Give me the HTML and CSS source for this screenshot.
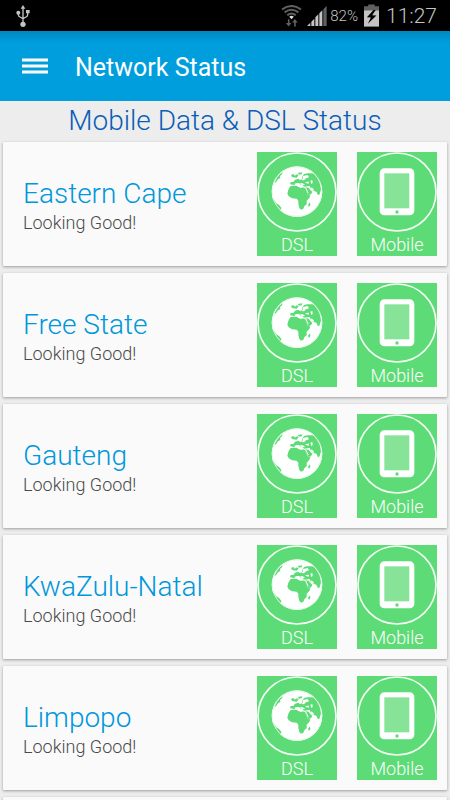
FILE: index.html
```html
<!DOCTYPE html>
<html lang="en">
<head>
<meta charset="utf-8">
<meta name="viewport" content="width=device-width, initial-scale=1">
<title>Network Status</title>
<link rel="stylesheet" href="styles.css">
</head>
<body>
<svg class="defs" aria-hidden="true">
  <symbol id="globe" viewBox="0 0 240 240">
    <circle class="ring" cx="120" cy="120" r="117"/>
    <circle class="solid" cx="120" cy="119" r="76"/>
    <g class="land">
      <path d="M100 103L108 101L119 101L124 105L133 108L137 106L145 109L149 120L153 129L160 130L157 138L149 146L149 157L143 161L139 170L132 173L127 168L124 155L124 146L119 140L105 139L95 133L91 125L94 113Z"/>
      <path d="M145 106L155 107L160 114L166 119L162 127L154 129L148 118Z"/>
      <path d="M99 97L101 90L109 90L114 83L124 80L129 84L136 80L136 74L141 66L151 64L172 64L184 77L190 91L192 112L188 127L183 130L178 119L168 116L161 109L158 102L141 104L136 99L131 100L126 93L120 93L112 99Z"/>
      <path d="M103 68L110 66L113 71L120 67L125 70L119 77L108 76L103 73ZM122 63L136 61L134 67L126 68ZM153 158L159 151L160 159L156 165Z"/>
      <path d="M69 64L77 60L75 67L69 72L70 78L63 82L57 91L52 92L59 76ZM47 145L52 145L58 154L66 159L73 167L72 174L65 173L54 162Z"/>
    </g>
    <path class="solid" d="M126 95L135 93L143 97L142 100L134 99ZM145 90L156 89L155 95L147 93ZM160 86L166 84L167 93L163 96ZM138 72L152 69L156 76L147 79L141 85L132 84L138 80ZM145 107L148 108L155 123L152 123ZM164 106L171 113L169 117L161 111ZM113 95L118 94L131 100L126 102L114 99Z"/>
    <circle class="rim" cx="120" cy="119" r="74"/>
  </symbol>
  <symbol id="tablet" viewBox="0 0 240 240">
    <circle class="ring" cx="120" cy="120" r="117"/>
    <rect class="solid" x="68" y="49" width="104" height="141" rx="14"/>
    <rect class="screen" x="82" y="64" width="75" height="105"/>
    <circle class="home" cx="120" cy="180" r="5"/>
  </symbol>
</svg>

<div class="statusbar">
  <svg class="usb" viewBox="0 0 42 66" role="img" aria-label="USB connected">
    <path class="wire" d="M21 8V57M7 24V29Q7 34 12 36L21 41M35 22V29Q35 34 30 36L21 41"/>
    <path d="M21 0L28 11H14ZM30 15H41V25H30Z"/>
    <circle cx="7" cy="23" r="6"/><circle cx="21" cy="58" r="8"/>
  </svg>
  <div class="indicators">
    <svg class="wifi" viewBox="0 0 64 66" role="img" aria-label="Wi-Fi">
      <path class="wave" d="M3 13Q32 -8 61 13M11 22Q32 6 53 22M19 31Q32 20 45 31"/>
      <path class="signal" d="M25 35Q32 30 39 35L32 43Z"/>
      <path class="wave-fill" d="M21 43H26V54H32L23 65L15 54H21ZM40 65H45V53H51L42 42L34 53H40Z"/>
    </svg>
    <svg class="cell" viewBox="0 0 60 60" role="img" aria-label="Mobile signal">
      <path d="M0 60L10 50V60ZM13 60V47L22 38V60ZM25 60V34L34 25V60ZM37 60V22L46 13V60Z"/>
      <path class="wave-fill" d="M49 60V10L59 0V60Z"/>
    </svg>
    <span class="percent">82%</span>
    <svg class="battery" viewBox="0 0 46 68" role="img" aria-label="Charging">
      <path class="wave-fill" d="M13 0H33V6H46V18H0V6H13Z"/>
      <path d="M0 18H46V68H0Z"/>
      <path class="bolt" d="M29 17L9 39L21 40L12 59L38 34L25 33L36 17Z"/>
    </svg>
    <time class="clock">11:27</time>
  </div>
</div>

<header class="appbar">
  <button class="menu" type="button" aria-label="Open menu">
    <svg viewBox="0 0 26 16"><path d="M0 2H26M0 8H26M0 14H26"/></svg>
  </button>
  <h1>Network Status</h1>
</header>

<main>
  <h2>Mobile Data &amp; DSL Status</h2>
  <ul class="regions">
    <li class="card">
      <div class="info"><h3>Eastern Cape</h3><p>Looking Good!</p></div>
      <div class="tile"><svg><use href="#globe"/></svg><span>DSL</span></div>
      <div class="tile"><svg><use href="#tablet"/></svg><span>Mobile</span></div>
    </li>
    <li class="card">
      <div class="info"><h3>Free State</h3><p>Looking Good!</p></div>
      <div class="tile"><svg><use href="#globe"/></svg><span>DSL</span></div>
      <div class="tile"><svg><use href="#tablet"/></svg><span>Mobile</span></div>
    </li>
    <li class="card">
      <div class="info"><h3>Gauteng</h3><p>Looking Good!</p></div>
      <div class="tile"><svg><use href="#globe"/></svg><span>DSL</span></div>
      <div class="tile"><svg><use href="#tablet"/></svg><span>Mobile</span></div>
    </li>
    <li class="card">
      <div class="info"><h3>KwaZulu-Natal</h3><p>Looking Good!</p></div>
      <div class="tile"><svg><use href="#globe"/></svg><span>DSL</span></div>
      <div class="tile"><svg><use href="#tablet"/></svg><span>Mobile</span></div>
    </li>
    <li class="card">
      <div class="info"><h3>Limpopo</h3><p>Looking Good!</p></div>
      <div class="tile"><svg><use href="#globe"/></svg><span>DSL</span></div>
      <div class="tile"><svg><use href="#tablet"/></svg><span>Mobile</span></div>
    </li>
    <li class="card next"></li>
  </ul>
</main>
</body>
</html>
```
FILE: styles.css
```css
* {
  box-sizing: border-box;
}

body {
  margin: 0;
  height: 100vh;
  display: flex;
  flex-direction: column;
  background: #ededed;
  font-family: Roboto, "Liberation Sans", sans-serif;
}

h1,
h2,
h3,
p,
ul {
  margin: 0;
  padding: 0;
  font-weight: 350;
}

.defs {
  position: absolute;
  width: 0;
  height: 0;
}

.statusbar {
  flex: none;
  display: flex;
  align-items: center;
  justify-content: space-between;
  height: 31px;
  padding: 0 13px 0 16px;
  background: #000;
  color: #c4c4c4;
  fill: #c4c4c4;
}

.usb {
  width: 14px;
  height: 22px;
}

.wire {
  fill: none;
  stroke: #c4c4c4;
  stroke-width: 4;
}

.indicators {
  display: flex;
  align-items: center;
}

.wifi {
  width: 21px;
  height: 22px;
  margin-right: 5px;
}

.wave {
  fill: none;
  stroke: #606060;
  stroke-width: 6;
}

.wave-fill {
  fill: #606060;
}

.signal {
  fill: #ddd;
}

.cell {
  width: 20px;
  height: 20px;
  margin-right: 3px;
}

.percent {
  margin-right: 6px;
  font-size: 15px;
  font-weight: 350;
}

.battery {
  width: 15px;
  height: 23px;
  margin-right: 7px;
}

.bolt {
  fill: #000;
}

.clock {
  font-size: 21px;
  font-weight: 350;
}

.appbar {
  flex: none;
  display: flex;
  align-items: center;
  gap: 19px;
  height: 70px;
  padding: 0 14px;
  background: linear-gradient(#0088bd, #009edd 12px);
  color: #fff;
}

.menu {
  width: 42px;
  height: 42px;
  padding: 8px;
  border: 0;
  background: none;
}

.menu svg {
  display: block;
  width: 26px;
  height: 16px;
  stroke: #fff;
  stroke-width: 3;
}

h1 {
  padding-top: 3px;
  font-size: 25px;
  font-weight: 400;
  line-height: 32px;
}

main {
  flex: 1;
  min-height: 0;
  overflow: hidden;
}

h2 {
  height: 41px;
  color: #0b5eb8;
  font-size: 28px;
  line-height: 40px;
  text-align: center;
}

.regions {
  display: grid;
  gap: 7px;
  padding: 0 3px;
  list-style: none;
}

.card {
  display: flex;
  align-items: center;
  gap: 20px;
  min-height: 124px;
  padding: 10px 10px 10px 20px;
  border-radius: 1px;
  background: #fafafa;
  box-shadow: 0 1px 3px rgba(0, 0, 0, 0.35);
}

.info {
  flex: 1;
  padding-top: 4px;
}

h3 {
  color: #0097db;
  font-size: 28px;
  line-height: 34px;
}

p {
  color: #4a4a4a;
  font-size: 18px;
  line-height: 24px;
}

.tile {
  width: 80px;
  height: 104px;
  background: #5ddb76;
  color: #fff;
  text-align: center;
}

.tile svg {
  display: block;
  width: 80px;
  height: 80px;
}

.tile span {
  display: block;
  font-size: 18px;
  font-weight: 350;
  line-height: 26px;
}

.ring {
  fill: none;
  stroke: #f4fff6;
  stroke-width: 5;
}

.solid {
  fill: #fff;
}

.land {
  fill: #5ddb76;
}

.rim {
  fill: none;
  stroke: #e4f9e8;
  stroke-width: 3;
}

.screen {
  fill: #86e398;
}

.home {
  fill: #5ddb76;
}
```
